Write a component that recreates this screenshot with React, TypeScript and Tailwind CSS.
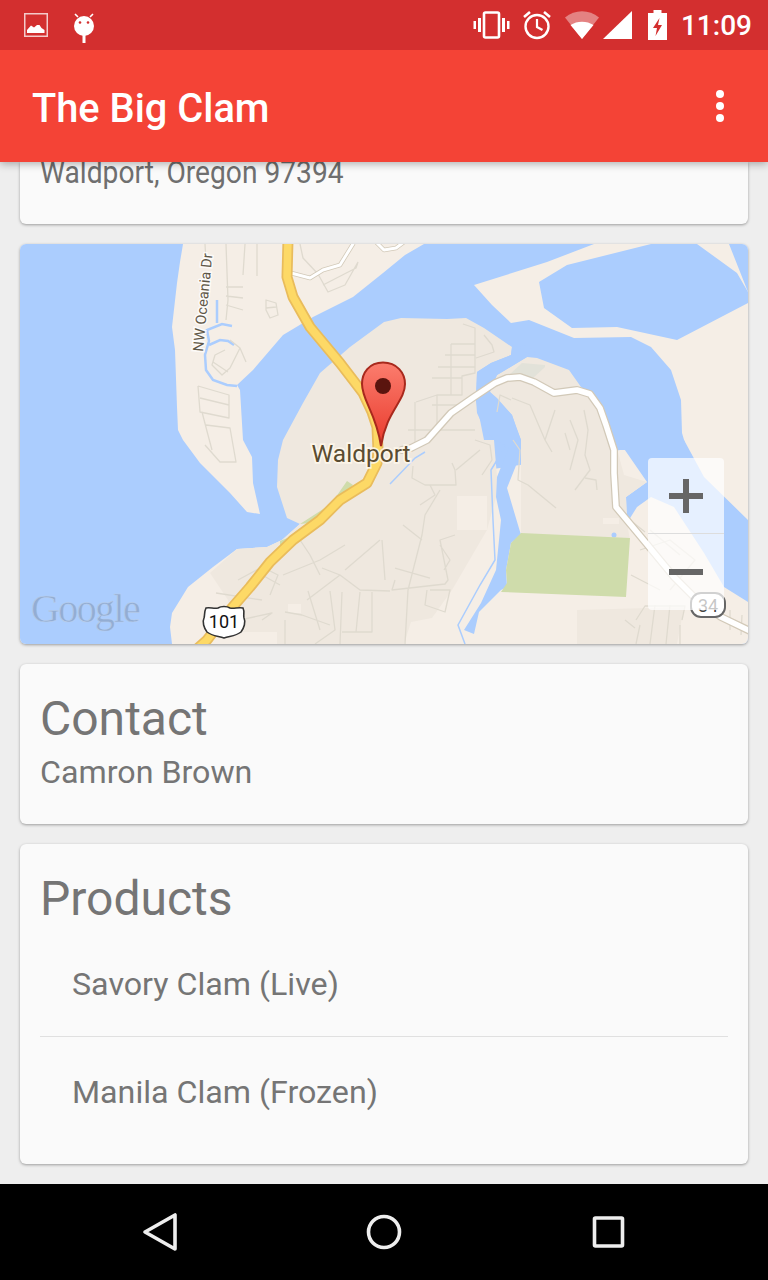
import React from "react";

const Roads: string[] = [
  "M205 244 L206 262 M226 244 L228 300 L226 320 M245 244 L243 275 M226 287 L243 287 M226 296 L243 298 M226 305 L243 310 M257 244 L257 276",
  "M266 300 L276 303 L278 315 L270 318 L266 310 Z M266 308 L276 307",
  "M300 244 L303 258 L318 274 L328 292 L345 285 L358 262 M323 285 L356 268 L358 262",
  "M230 340 L240 348 L230 368 L222 375 L212 365 L215 355 L225 350 M213 362 L228 372 M240 348 L246 362",
  "M198 386 L229 395 L229 418 L200 412 L198 386 M200 398 L229 405 M202 412 L208 435 L212 450 M206 425 L230 428 L236 462 L220 462 L205 445",
  "M463 324 L475 328 L475 373 L462 376 L462 395 L437 395 L437 430 L420 442 M451 344 L475 344 M445 355 L475 355 M438 367 L475 367 M432 378 L462 378 M451 344 L451 395 M437 395 L416 402 M432 405 L462 405 M415 402 L415 445 M408 430 L475 430 M484 335 L492 345 L494 352 L476 358",
  "M413 466 L412 478 L425 485 L456 485 L455 470 L452 463 M430 485 L435 495 L420 505 M475 440 L490 445 L492 460 L482 475 M456 470 L480 450 M440 490 L425 515 L422 535 L408 590 L405 644 M403 525 L422 540 M427 590 L425 605 L445 612 L450 590 L430 590 M395 568 L430 578 M395 580 L392 590 L445 584 L448 580 L440 540 L455 535 M440 545 L450 560 L444 570",
  "M513 440 L520 450 L518 480 L528 485 L556 508 M570 420 L578 440 L570 470 M585 478 L596 480 L597 490 M584 410 L588 430 L585 455 L590 470 L575 490",
  "M511 400 L500 395 L497 412 M512 398 L530 405 L545 440 L555 410 M545 440 L552 452 M565 433 L570 450",
  "M630 520 L645 532 M640 550 L670 540 L695 560 L670 590 M650 530 L680 555 M631 575 L660 590",
  "M300 540 L310 555 L320 575 M283 575 L320 560 L345 545 M307 600 L340 575 L360 590 L390 591 M340 575 L322 568 M345 570 L380 540 M382 540 L385 580",
  "M238 580 L262 567 L278 575 L270 595 M216 593 L262 600 M262 575 L280 585",
  "M308 591 L320 630 M330 591 L335 630 L315 644 M342 592 L340 644 M342 632 L372 632 L372 592 M360 592 L356 632 M285 620 L285 644 M240 620 L272 613 L262 620 M285 612 L302 615 L330 625",
  "M636 620 L645 606 L685 606 L682 620 M640 625 L636 644 M655 605 L650 644 M670 605 L666 644 M680 625 L680 644 M625 620 L635 628 M730 610 L730 630 M742 615 L741 635",
];

const CENTER_ROAD =
  "M402 450 L411 448 L427 440 L451 413 L474 397 L495 383 L507 378 L520 377 L534 382 L554 393 L577 390 L590 394 L600 408 L606 425 L614 450 L614 473 L616 507 L641 537 L674 577 L700 603 L721 617 L750 631";
const HIGHWAY =
  "M288 240 L287 277 L293 297 L310 327 L340 363 L363 393 L372 412 L377 427 L378 450 L377 463 L367 483 L340 500 L320 520 L293 540 L270 562 L250 587 L230 610 L207 640 L198 648";

const MapDrawing = () => (
  <svg viewBox="20 244 728 400" className="block w-full h-full" xmlns="http://www.w3.org/2000/svg">
    <defs>
      <linearGradient id="pin" x1="0" y1="0" x2="0" y2="1">
        <stop offset="0" stopColor="#fb7d6e" />
        <stop offset="1" stopColor="#e93a2c" />
      </linearGradient>
    </defs>
    <rect x="20" y="244" width="728" height="400" fill="#abcdfe" />
    {/* north peninsula */}
    <path fill="#f5eee6" d="M183 244 L180 262 L177 283 L172 327 L175 350 L177 407 L178 430 L183 440 L200 463 L230 493 L247 512 L260 514 L253 483 L252 457 L243 440 L240 390 L237 385 L253 370 L283 335 L313 317 L353 297 L383 273 L405 255 L424 244 Z" />
    {/* east sandbars and south land */}
    <path fill="#f5eee6" d="M474 285 L547 262 L594 244 L729 244 L748 292 L748 644 L172 644 L170 627 L172 613 L188 587 L213 567 L237 549 L267 547 L282 540 L300 524 L420 480 L620 450 L687 450 L682 433 L681 400 L671 370 L651 347 L631 337 L574 338 L529 320 L511 323 L492 305 Z" />
    {/* lake */}
    <path fill="#abcdfe" d="M539 282 L567 265 L651 244 L697 244 L737 273 L748 292 L748 303 L677 340 L617 327 L572 328 L544 308 Z" />
    {/* east bay */}
    <path fill="#abcdfe" d="M618 440 L684 440 L704 477 L748 520 L748 602 L724 587 L704 553 L674 507 L651 497 L637 507 L627 523 L626 497 L647 482 Z" />
    {/* darker land: centre */}
    <path fill="#efe8df" d="M384 322 L401 318 L447 319 L466 318 L484 328 L512 347 L511 355 L491 363 L477 372 L476 400 L484 440 L494 440 L497 477 L496 497 L487 530 L452 590 L432 618 L411 622 L404 644 L277 644 L277 632 L235 632 L228 600 L210 573 L237 549 L267 547 L282 540 L300 524 L287 518 L277 487 L278 460 L283 440 L303 403 L320 373 L350 347 Z" />
    {/* darker land: east of the river */}
    <path fill="#efe8df" d="M490 392 L497 375 L527 357 L537 358 L569 370 L581 387 L597 400 L607 427 L616 445 L624 475 L647 482 L626 497 L627 523 L630 540 L521 535 L521 440 L512 415 Z" />
    <path fill="#efe8df" d="M577 644 L577 610 L684 607 L677 644 Z" />
    <rect x="457" y="496" width="30" height="34" fill="#f5eee6" />
    <rect x="603" y="518" width="16" height="6" fill="#f5eee6" />
    <rect x="288" y="604" width="13" height="9" fill="#f5eee6" />
    {/* bridge water wedge */}
    <path fill="#abcdfe" d="M477 372 L491 363 L511 355 L512 347 L527 345 L527 357 L497 375 L493 382 L476 400 Z" />
    <path fill="#abcdfe" d="M520 345 C528 345 534 350 537 355 L530 354 C525 351 520 350 520 345 Z" />
    {/* river */}
    <path fill="#abcdfe" d="M476 400 L490 392 L497 398 L512 415 L516 427 L521 440 L521 453 L507 488 L521 535 L511 543 L506 570 L507 587 L501 590 L479 612 L474 634 L464 630 L481 603 L496 570 L501 520 L496 497 L497 477 L509 447 L494 440 L484 428 L477 413 Z" />
    <path fill="none" stroke="#abcdfe" strokeWidth="1.5" d="M505 447 L491 470 L493 520 L495 560 L480 585 L458 625 L465 644" />
    <path fill="none" stroke="#abcdfe" strokeWidth="1.5" d="M390 484 L415 458 L425 452" />
    <circle cx="614" cy="535" r="2.5" fill="#abcdfe" />
    {/* parks */}
    <path fill="#cfdcab" d="M521 533 L630 538 L626 597 L501 592 L507 583 L506 570 L511 543 Z" />
    <path fill="#cfdcab" d="M300 524 L331 504 L347 481 L353 485 L340 500 L318 522 Z" />
    <path fill="#cfdcab" d="M280 541 L300 533 L280 552 Z" />
    <path fill="#e2e2d9" d="M522 363 L545 365 L545 367 L533 378 L508 376 Z" />
    {/* canals */}
    <path fill="none" stroke="#abcdfe" strokeWidth="2.5" d="M217 300 L217 323 M232 326 L222 324 L207 330 L209 341 L205 355 L206 370 L213 380 L227 385 L237 386 M209 345 L220 340 L228 341 L234 345" />
    {/* minor roads */}
    {Roads.map((d, i) => (
      <path key={i} d={d} fill="none" stroke="#dfdacf" strokeWidth="1.3" strokeLinejoin="round" />
    ))}
    {/* white roads */}
    <g fill="none" strokeLinejoin="round" strokeLinecap="round">
      <path d={CENTER_ROAD} stroke="#d2c9b8" strokeWidth="8" />
      <path d={CENTER_ROAD} stroke="#ffffff" strokeWidth="5.5" />
      <path d="M291 273 L310 278 L323 270 L340 265 L353 244" stroke="#d2c9b8" strokeWidth="4.5" />
      <path d="M291 273 L310 278 L323 270 L340 265 L353 244" stroke="#ffffff" strokeWidth="3" />
      <path d="M374 240 L384 250 L396 248 L404 242" stroke="#d2c9b8" strokeWidth="4.5" />
      <path d="M374 240 L384 250 L396 248 L404 242" stroke="#ffffff" strokeWidth="3" />
    </g>
    {/* highway */}
    <g fill="none" strokeLinejoin="round">
      <path d={HIGHWAY} stroke="#e9bc5c" strokeWidth="11" />
      <path d={HIGHWAY} stroke="#fdd966" strokeWidth="7.5" />
    </g>
    {/* Google */}
    <text x="31" y="622" fontFamily="'Liberation Serif', serif" fontSize="40" fill="#93add3" stroke="#bcd0ec" strokeWidth="0.5" letterSpacing="-1.6">Google</text>
    {/* 101 */}
    <path d="M206 608 C210 607 214 609 218 608 C221 606 227 606 230 608 C234 609 238 607 243 608 C245 612 243 615 244 618 C246 622 244 628 241 632 C236 636 230 636 224 638 C218 636 212 636 207 632 C204 628 202 622 204 618 C205 615 204 612 206 608 Z" fill="#ffffff" stroke="#333333" strokeWidth="1.6" />
    <text x="224" y="628" textAnchor="middle" fontFamily="Roboto, sans-serif" fontSize="18" fill="#111111">101</text>
    {/* 34 */}
    <rect x="691" y="593" width="34" height="24" rx="10" fill="#ffffff" stroke="#666666" strokeWidth="2" />
    <text x="708" y="612" textAnchor="middle" fontFamily="Roboto, sans-serif" fontSize="18" fill="#444444">34</text>
    {/* NW Oceania Dr */}
    <text transform="translate(203 352) rotate(-84.5)" fontFamily="Roboto, sans-serif" fontSize="14.5" fill="#5f5747" stroke="#ffffff" strokeOpacity="0.75" strokeWidth="3" paintOrder="stroke" letterSpacing="0.1">NW Oceania Dr</text>
    {/* pin */}
    <path d="M383 362.5 C369 362.5 362 373 362 384 C362 401 376 412 381 446 C386 412 405 401 405 384 C405 373 397 362.5 383 362.5 Z" fill="url(#pin)" stroke="#a8291d" strokeWidth="2" />
    <circle cx="383" cy="386" r="8" fill="#5a140e" />
    {/* Waldport */}
    <text x="311.5" y="462" fontFamily="Roboto, sans-serif" fontSize="24.5" fill="#5a4c30" stroke="#fff8ec" strokeOpacity="0.85" strokeWidth="3.5" paintOrder="stroke">Waldport</text>
  </svg>
);

const StatusLeft = () => (
  <div className="flex items-center">
    <svg width="24" height="24" viewBox="0 0 24 24" className="ml-6">
      <rect x="0.75" y="0.75" width="22.5" height="22.5" fill="none" stroke="#ffffff" strokeOpacity="0.75" strokeWidth="1.5" />
      <path d="M3 20 L3 17 L7 12.5 L10 14.5 L13 12 L15.5 12 L17.5 15 L20.5 17 L20.5 20 Z" fill="#ffffff" />
    </svg>
    <svg width="24" height="32" viewBox="0 0 24 32" className="ml-6 mt-2">
      <path d="M6 4 L3 1 M18 4 L21 1" stroke="#ffffff" strokeWidth="1.6" />
      <circle cx="12" cy="13" r="10" fill="#ffffff" />
      <rect x="10.5" y="22" width="3" height="8" fill="#ffffff" />
      <circle cx="8" cy="9.5" r="1.3" fill="#d32f2f" />
      <circle cx="16" cy="9.5" r="1.3" fill="#d32f2f" />
    </svg>
  </div>
);

const StatusRight = () => (
  <div className="flex items-center h-full">
    <svg width="38" height="28" viewBox="0 0 38 28">
      <rect x="11" y="1.5" width="15" height="25" rx="1.5" fill="none" stroke="#ffffff" strokeWidth="2.6" />
      <rect x="0.5" y="10" width="2.5" height="8" fill="#ffffff" />
      <rect x="5" y="7" width="3" height="14" fill="#ffffff" />
      <rect x="29" y="7" width="3" height="14" fill="#ffffff" />
      <rect x="34" y="10" width="2.5" height="8" fill="#ffffff" />
    </svg>
    <svg width="30" height="30" viewBox="0 0 30 30" className="ml-[11px]">
      <circle cx="15" cy="16.5" r="11.5" fill="none" stroke="#ffffff" strokeWidth="2.4" />
      <path d="M15 9 L15 17 L20.5 20" fill="none" stroke="#ffffff" strokeWidth="2.2" />
      <path d="M2 7 L8 2 M28 7 L22 2" stroke="#ffffff" strokeWidth="2.6" />
    </svg>
    <svg width="34" height="28" viewBox="0 0 34 28" className="ml-[13px]">
      <path d="M0 6.5 C10 -2 24 -2 34 6.5 L17 28 Z" fill="#ffffff" fillOpacity="0.4" />
      <path d="M5.5 14 C12 9.5 22 9.5 28.5 14 L17 28 Z" fill="#ffffff" />
    </svg>
    <svg width="29" height="28" viewBox="0 0 29 28" className="ml-1">
      <path d="M0 28 L29 0 L29 28 Z" fill="#ffffff" />
    </svg>
    <svg width="19" height="30" viewBox="0 0 19 30" className="ml-[16px]">
      <path d="M5.5 0 H13.5 V3 H19 V30 H0 V3 H5.5 Z" fill="#ffffff" />
      <path d="M11.5 8 L5 18 H9 L7.5 26 L14 15 H10 Z" fill="#d32f2f" />
    </svg>
    <span className="ml-[14px] mr-[16px] mt-0.5 text-[28px] leading-none font-medium text-white">11:09</span>
  </div>
);

const Card = ({ className = "", children }: { className?: string; children: React.ReactNode }) => (
  <div className={`mx-5 rounded-md bg-[#fafafa] shadow-[0_1px_3px_rgba(0,0,0,0.35)] ${className}`}>{children}</div>
);

export default function App() {
  return (
    <div className="flex h-[1280px] w-[768px] flex-col overflow-hidden bg-[#eeeeee] font-['Roboto',sans-serif]">
      <header className="relative z-10 shadow-[0_2px_8px_rgba(0,0,0,0.3)]">
        <div className="flex h-[50px] items-center justify-between bg-[#d32f2f]">
          <StatusLeft />
          <StatusRight />
        </div>
        <div className="flex h-[112px] items-center justify-between bg-[#f44336] pl-8 pr-[44px]">
          <h1 className="mt-[6px] text-[39.8px] font-medium leading-none text-white">The Big Clam</h1>
          <div className="flex flex-col gap-1">
            <span className="h-2 w-2 rounded-full bg-white" />
            <span className="h-2 w-2 rounded-full bg-white" />
            <span className="h-2 w-2 rounded-full bg-white" />
          </div>
        </div>
      </header>
      <main className="flex flex-1 flex-col gap-5 overflow-hidden">
        <Card className="h-[62px] rounded-t-none">
          <p className="mt-[-10px] ml-5 origin-left scale-x-[0.88] whitespace-nowrap text-[32px] leading-[40px] text-[#6f6f6f]">
            Waldport, Oregon 97394
          </p>
        </Card>
        <Card className="relative h-[400px] overflow-hidden">
          <MapDrawing />
          <div className="absolute right-6 top-[214px] flex h-[152px] w-[76px] flex-col rounded bg-white/70">
            <div className="flex h-[76px] items-center justify-center border-b border-[#dddddd]">
              <span className="relative block h-[34px] w-[34px]">
                <span className="absolute left-0 top-[14px] h-[6px] w-[34px] bg-[#666666]" />
                <span className="absolute left-[14px] top-0 h-[34px] w-[6px] bg-[#666666]" />
              </span>
            </div>
            <div className="flex flex-1 items-center justify-center">
              <span className="block h-[6px] w-[34px] bg-[#666666]" />
            </div>
          </div>
        </Card>
        <Card className="h-[160px] px-5 pt-[27px]">
          <h2 className="text-[48px] leading-[56px] text-[#757575]">Contact</h2>
          <p className="mt-[5px] text-[32.2px] leading-[40px] text-[#757575]">Camron Brown</p>
        </Card>
        <Card className="h-[320px] pt-[27px]">
          <h2 className="pl-5 text-[48px] leading-[56px] text-[#757575]">Products</h2>
          <div className="mt-[5px] flex h-[104px] items-center pl-[52px] text-[32.2px] leading-[40px] text-[#757575]">Savory Clam (Live)</div>
          <div className="ml-5 mr-5 h-px bg-[#e0e0e0]" />
          <div className="mt-[35px] pl-[52px] text-[32.2px] leading-[40px] text-[#757575]">Manila Clam (Frozen)</div>
        </Card>
      </main>
      <nav className="h-[96px] bg-black">
        <div className="flex h-full items-center">
          <svg width="768" height="96" viewBox="0 1184 768 96" fill="none" stroke="#eeeeee" strokeWidth="3.6" strokeLinejoin="round" className="block">
            <path d="M145 1232 L175 1215 L175 1249 Z" />
            <circle cx="384" cy="1232" r="15.5" />
            <rect x="594.5" y="1218" width="28" height="28" rx="1" />
          </svg>
        </div>
      </nav>
    </div>
  );
}
